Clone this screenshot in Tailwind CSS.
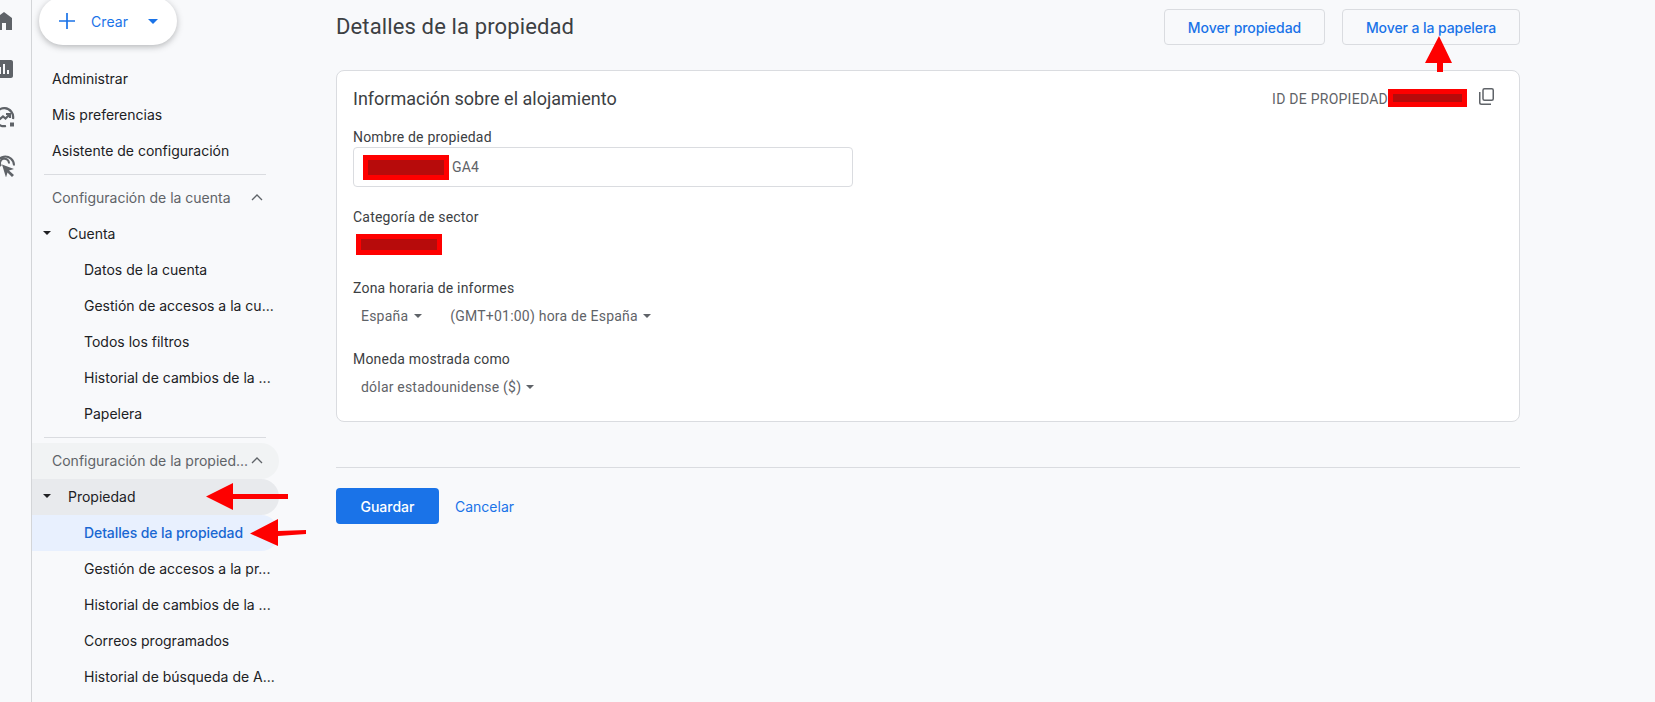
<!DOCTYPE html>
<html lang="es"><head><meta charset="utf-8"><title>Detalles de la propiedad</title>
<script src="https://cdn.jsdelivr.net/npm/@tailwindcss/browser@4"></script></head>
<body class="m-0 bg-[#f8f9fb]">
<div class="relative flex h-[702px] w-[1655px] overflow-hidden bg-[#f8f9fb] font-['Inter',sans-serif] text-[#202124] text-[14px]">
  <!-- rail -->
  <div class="w-[32px] h-full shrink-0 border-r border-[#d3d5d8] flex flex-col gap-[24px] pt-[9px] overflow-hidden">
    <svg class="w-6 h-6 ml-[-8px] shrink-0" viewBox="0 0 24 24" fill="#5f6368"><path d="M4 21V9l8-6 8 6v12h-6v-7h-4v7z"/></svg>
    <svg class="w-6 h-6 ml-[-8px] shrink-0" viewBox="0 0 24 24" fill="#5f6368"><path d="M19 3H5c-1.100 0-2 .9-2 2v14c0 1.100.9 2 2 2h14c1.100 0 2-.9 2-2V5c0-1.100-.9-2-2-2zM9 17H7v-7h2v7zm4 0h-2V7h2v10zm4 0h-2v-4h2v4z"/></svg>
    <svg class="w-6 h-6 ml-[-8px] shrink-0" viewBox="0 0 24 24" fill="none" stroke="#5f6368" stroke-width="2.200"><path d="M14 21a9 9 0 1 1 7-7"/><path d="M7.500 14.500l3.500-3 2.500 2 4-4M14 9h4v4"/><path fill="#5f6368" stroke="none" d="M18 17.500h4v4h-4z"/></svg>
    <svg class="w-6 h-6 ml-[-8px] shrink-0" viewBox="0 0 24 24" fill="none" stroke="#5f6368" stroke-width="2"><path d="M5 15.500a8.800 8.800 0 1 1 17-3M9 13a4.500 4.500 0 1 1 8-2.500"/><path fill="#5f6368" stroke="none" d="M10 11.500l12 4.500-5 1.500 5 4.500-2 2-4.500-4.500-1.500 5z"/><path d="M2 19l4-2M4 23l3-3"/></svg>
  </div>
  <!-- nav -->
  <nav class="w-[247px] shrink-0 h-full flex flex-col">
    <div class="mt-[-3px] ml-[7px] mb-[16px] w-[138px] h-[48px] shrink-0 bg-white rounded-[24px] shadow-[0_2px_6px_rgba(60,64,67,.35)] flex items-center text-[#1a73e8] text-[14px]">
      <svg class="ml-[20px] w-[16px] h-[16px]" viewBox="0 0 16 16" fill="none" stroke="#1a73e8" stroke-width="1.700"><path d="M8 0v16M0 8h16"/></svg>
      <span class="ml-[16px] tracking-[0.1px]">Crear</span>
      <svg class="ml-[20px] w-[10px] h-[5px]" viewBox="0 0 10 5" fill="#1a73e8"><path d="M0 0h10L5 5z"/></svg>
    </div>
    <div class="pl-[20px] pb-[2px] h-9 shrink-0 flex items-center">Administrar</div>
    <div class="pl-[20px] pb-[2px] h-9 shrink-0 flex items-center">Mis preferencias</div>
    <div class="pl-[20px] pb-[2px] h-9 shrink-0 flex items-center">Asistente de configuración</div>
    <div class="ml-[12px] mr-[13px] my-[5px] h-px shrink-0 bg-[#dadce0]"></div>
    <div class="pl-[20px] pb-[2px] h-9 shrink-0 flex items-center justify-between pr-[16px] text-[#5f6368]">Configuración de la cuenta
      <svg class="w-[12px] h-[7px]" viewBox="0 0 12 7" fill="none" stroke="#5f6368" stroke-width="1.300"><path d="M1 6l5-5 5 5"/></svg></div>
    <div class="h-9 pb-[2px] shrink-0 flex items-center"><svg class="ml-[11px] mr-[17px] w-[8px] h-[4px]" viewBox="0 0 8 4" fill="#202124"><path d="M0 0h8L4 4z"/></svg>Cuenta</div>
    <div class="pl-[52px] pb-[2px] h-9 shrink-0 flex items-center">Datos de la cuenta</div>
    <div class="pl-[52px] pb-[2px] h-9 shrink-0 flex items-center">Gestión de accesos a la cu...</div>
    <div class="pl-[52px] pb-[2px] h-9 shrink-0 flex items-center">Todos los filtros</div>
    <div class="pl-[52px] pb-[2px] h-9 shrink-0 flex items-center">Historial de cambios de la ...</div>
    <div class="pl-[52px] pb-[2px] h-9 shrink-0 flex items-center">Papelera</div>
    <div class="ml-[12px] mr-[13px] mt-[5px] mb-[5px] h-px shrink-0 bg-[#dadce0]"></div>
    <div class="pl-[20px] pb-[2px] h-9 shrink-0 flex items-center justify-between pr-[16px] text-[#5f6368] bg-[#f1f3f4] rounded-r-[18px]">Configuración de la propied...
      <svg class="w-[12px] h-[7px]" viewBox="0 0 12 7" fill="none" stroke="#5f6368" stroke-width="1.300"><path d="M1 6l5-5 5 5"/></svg></div>
    <div class="h-9 pb-[2px] shrink-0 flex items-center bg-[#e8eaed] rounded-r-[18px]"><svg class="ml-[11px] mr-[17px] w-[8px] h-[4px]" viewBox="0 0 8 4" fill="#202124"><path d="M0 0h8L4 4z"/></svg>Propiedad</div>
    <div class="pl-[52px] pb-[2px] h-9 shrink-0 flex items-center text-[#1967d2] bg-[#e8f0fe] rounded-r-[18px] font-medium tracking-[-0.1px]">Detalles de la propiedad</div>
    <div class="pl-[52px] pb-[2px] h-9 shrink-0 flex items-center">Gestión de accesos a la pr...</div>
    <div class="pl-[52px] pb-[2px] h-9 shrink-0 flex items-center">Historial de cambios de la ...</div>
    <div class="pl-[52px] pb-[2px] h-9 shrink-0 flex items-center">Correos programados</div>
    <div class="pl-[52px] pb-[2px] h-9 shrink-0 flex items-center">Historial de búsqueda de A...</div>
  </nav>
  <!-- main -->
  <main class="ml-[57px] w-[1184px] shrink-0 flex flex-col">
    <div class="h-[70px] shrink-0 flex items-start">
      <h1 class="mt-[11px] text-[22px] leading-[32px] font-normal text-[#3c4043] tracking-[0.13px] font-['Roboto',sans-serif]">Detalles de la propiedad</h1>
      <button class="ml-auto mt-[9px] w-[161px] h-[36px] border border-[#dadce0] rounded-[4px] text-[#1a73e8] text-[14px] font-medium tracking-[-0.05px]">Mover propiedad</button>
      <button class="ml-[17px] mt-[9px] w-[178px] h-[36px] border border-[#dadce0] rounded-[4px] text-[#1a73e8] text-[14px] font-medium tracking-[-0.08px]">Mover a la papelera</button>
    </div>
    <section class="h-[352px] shrink-0 bg-white border border-[#dadce0] rounded-[8px] pl-[16px] pr-[25px] font-['Roboto',sans-serif] text-[#3c4043] tracking-[0.2px] flex flex-col">
      <div class="flex items-center h-[55px] shrink-0">
        <h2 class="text-[18px] font-normal tracking-normal text-[#3c4043]">Información sobre el alojamiento</h2>
        <span class="ml-auto mt-[2px] text-[14px] text-[#5f6368] tracking-[0.25px]">ID DE PROPIEDAD</span>
        <span class="mt-[-2px] w-[79px] h-[18px] border-[5px] border-[#fe0000] bg-[#b70b0b]"></span>
        <svg class="ml-[12px] mt-[-4px] w-[15px] h-[17px]" viewBox="0 0 15 17" fill="none" stroke="#5f6368" stroke-width="1.500"><rect x="4" y=".75" width="10.250" height="11.500" rx="1.500"/><path d="M.75 4v10.500c0 1 .8 1.750 1.750 1.750H12"/></svg>
      </div>
      <label class="mt-[1px] text-[14px] leading-5 block">Nombre de propiedad</label>
      <div class="w-[500px] h-[40px] border border-[#dadce0] rounded-[4px] flex items-center pl-[9px] shrink-0 text-[#5f6368]">
        <span class="w-[86px] h-[25px] border-[5px] border-[#fe0000] bg-[#b70b0b]"></span>
        <span class="ml-[3px]">GA4</span>
      </div>
      <label class="mt-[20px] text-[14px] leading-5">Categoría de sector</label>
      <span class="mt-[7px] ml-[3px] w-[86px] h-[21px] border-[5px] border-[#fe0000] bg-[#b70b0b] shrink-0"></span>
      <label class="mt-[23px] text-[14px] leading-5">Zona horaria de informes</label>
      <div class="mt-[8px] h-[20px] flex items-center ml-[8px] text-[#5f6368]">España
        <svg class="ml-[6px] w-[8px] h-[4px]" viewBox="0 0 8 4" fill="#5f6368"><path d="M0 0h8L4 4z"/></svg>
        <span class="ml-[28px] tracking-[0.22px]">(GMT+01:00) hora de España</span>
        <svg class="ml-[5px] w-[8px] h-[4px]" viewBox="0 0 8 4" fill="#5f6368"><path d="M0 0h8L4 4z"/></svg>
      </div>
      <label class="mt-[23px] text-[14px] leading-5">Moneda mostrada como</label>
      <div class="mt-[8px] h-[20px] flex items-center ml-[8px] text-[#5f6368]">dólar estadounidense ($)
        <svg class="ml-[5px] w-[8px] h-[4px]" viewBox="0 0 8 4" fill="#5f6368"><path d="M0 0h8L4 4z"/></svg>
      </div>
    </section>
    <div class="mt-[45px] h-px shrink-0 bg-[#dadce0]"></div>
    <div class="mt-[20px] flex items-center">
      <button class="w-[103px] h-[36px] rounded-[4px] bg-[#1a73e8] text-white font-medium">Guardar</button>
      <a class="ml-[16px] text-[#1a73e8]">Cancelar</a>
    </div>
  </main>
  <!-- annotation arrows -->
  <svg class="absolute left-0 top-0 w-[1655px] h-[702px] pointer-events-none" viewBox="0 0 1655 702" fill="#fe0000">
    <path d="M206 496.500 L233 483 L233 494 L288 494 L288 499 L233 499 L233 510 Z"/>
    <path d="M250 533.500 L278 519 L278 531 L306 530 L306 534 L278 536 L278 546 Z"/>
    <path d="M1439 36 L1452 63 L1443 63 L1443 72 L1437 72 L1437 63 L1425 63 Z"/>
  </svg>
</div>
</body></html>
